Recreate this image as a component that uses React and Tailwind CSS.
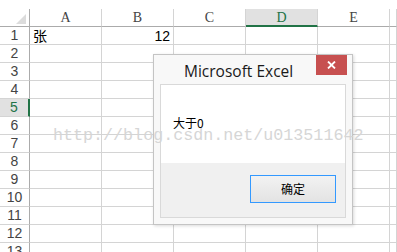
import React from 'react';

const cols = ['A', 'B', 'C', 'D', 'E', ''];
const rows = [1, 2, 3, 4, 5, 6, 7, 8, 9, 10, 11, 12, 13, 14];

const Cell = ({ children, className = '' }) => (
    <div className={`h-[18px] border-r border-b border-[#d4d4d4] ${className}`}>{children}</div>
);

const App = () => {
    return (
        <div className="relative w-[397px] h-[252px] overflow-hidden bg-white" style={{ fontFamily: '"Liberation Sans", "Noto Sans CJK SC", sans-serif' }}>
            <div className="h-[9px]" />
            <div className="grid grid-cols-[30px_72px_72px_72px_72px_72px_1fr]">
                {/* header row */}
                <div className="relative h-[18px] border-r border-b border-[#ababab]">
                    <div className="absolute right-[3px] bottom-[2px] w-0 h-0 border-l-[10px] border-l-transparent border-b-[10px] border-b-[#dcdcdc]" />
                </div>
                {cols.map((c) => (
                    <div
                        key={c || 'f'}
                        className={`h-[18px] flex items-center justify-center text-[14px] text-[#444] border-r border-[#d4d4d4] ${c === 'D' ? 'bg-[#e1e1e1] border-b-2 border-b-[#217346] text-[#217346]' : 'border-b border-b-[#ababab]'}`}
                        style={{ fontFamily: '"Liberation Serif", serif' }}
                    >
                        {c}
                    </div>
                ))}
                {rows.map((r) => (
                    <React.Fragment key={r}>
                        <div
                            className={`h-[18px] flex items-center justify-center text-[14px] border-b border-[#d4d4d4] ${r === 5 ? 'bg-[#e1e1e1] text-[#217346] border-r-2 border-r-[#217346]' : 'text-[#444] border-r border-r-[#ababab]'}`}
                        >
                            {r}
                        </div>
                        <Cell className="pl-[3px] text-[14px] leading-[18px] text-black">{r === 1 ? '张' : ''}</Cell>
                        <Cell className="pr-[3px] text-right text-[14px] leading-[18px] text-black">{r === 1 ? '12' : ''}</Cell>
                        <Cell />
                        <Cell />
                        <Cell />
                        <Cell />
                    </React.Fragment>
                ))}
            </div>

            {/* message box */}
            <div className="absolute left-[153px] top-[54px] w-[200px] h-[171px] flex flex-col bg-[#f8f8f8] border border-[#c4c4c4] shadow-[1px_1px_3px_rgba(0,0,0,0.15)]">
                <div className="h-[29px] flex items-start relative">
                    <div className="pl-[30px] pt-[5px] text-[15.5px] text-[#1a1a1a]" style={{ fontFamily: '"Open Sans", sans-serif' }}>
                        Microsoft Excel
                    </div>
                    <div className="absolute right-[5px] top-0 w-[31px] h-[20px] bg-[#c75050] flex items-center justify-center">
                        <svg width="9" height="8" viewBox="0 0 9 8">
                            <path d="M1 0.5 L8 7.5 M8 0.5 L1 7.5" stroke="white" strokeWidth="1.8" />
                        </svg>
                    </div>
                </div>
                <div className="mx-[6px] mb-[6px] flex-1 flex flex-col border border-[#d9d9d9]">
                    <div className="h-[78px] bg-white pl-[12px] pt-[29px] text-[12px] text-black" style={{ fontFamily: '"Noto Sans CJK SC", sans-serif' }}>
                        大于0
                    </div>
                    <div className="flex-1 bg-[#f0f0f0] flex justify-end items-start pt-[12px] pr-[9px]">
                        <div className="w-[86px] h-[28px] border border-[#3399ff] bg-gradient-to-b from-[#f2f2f2] to-[#e3e3e3] flex items-center justify-center text-[12px] text-black" style={{ fontFamily: '"Noto Sans CJK SC", sans-serif' }}>
                            确定
                        </div>
                    </div>
                </div>
            </div>

            {/* watermark */}
            <div className="absolute left-[53px] top-[126px] text-[16.7px] leading-[20px] text-[#d6d6d6] whitespace-nowrap pointer-events-none" style={{ fontFamily: '"Liberation Mono", monospace' }}>
                http://blog.csdn.net/u013511642
            </div>
        </div>
    );
};

export default App;
